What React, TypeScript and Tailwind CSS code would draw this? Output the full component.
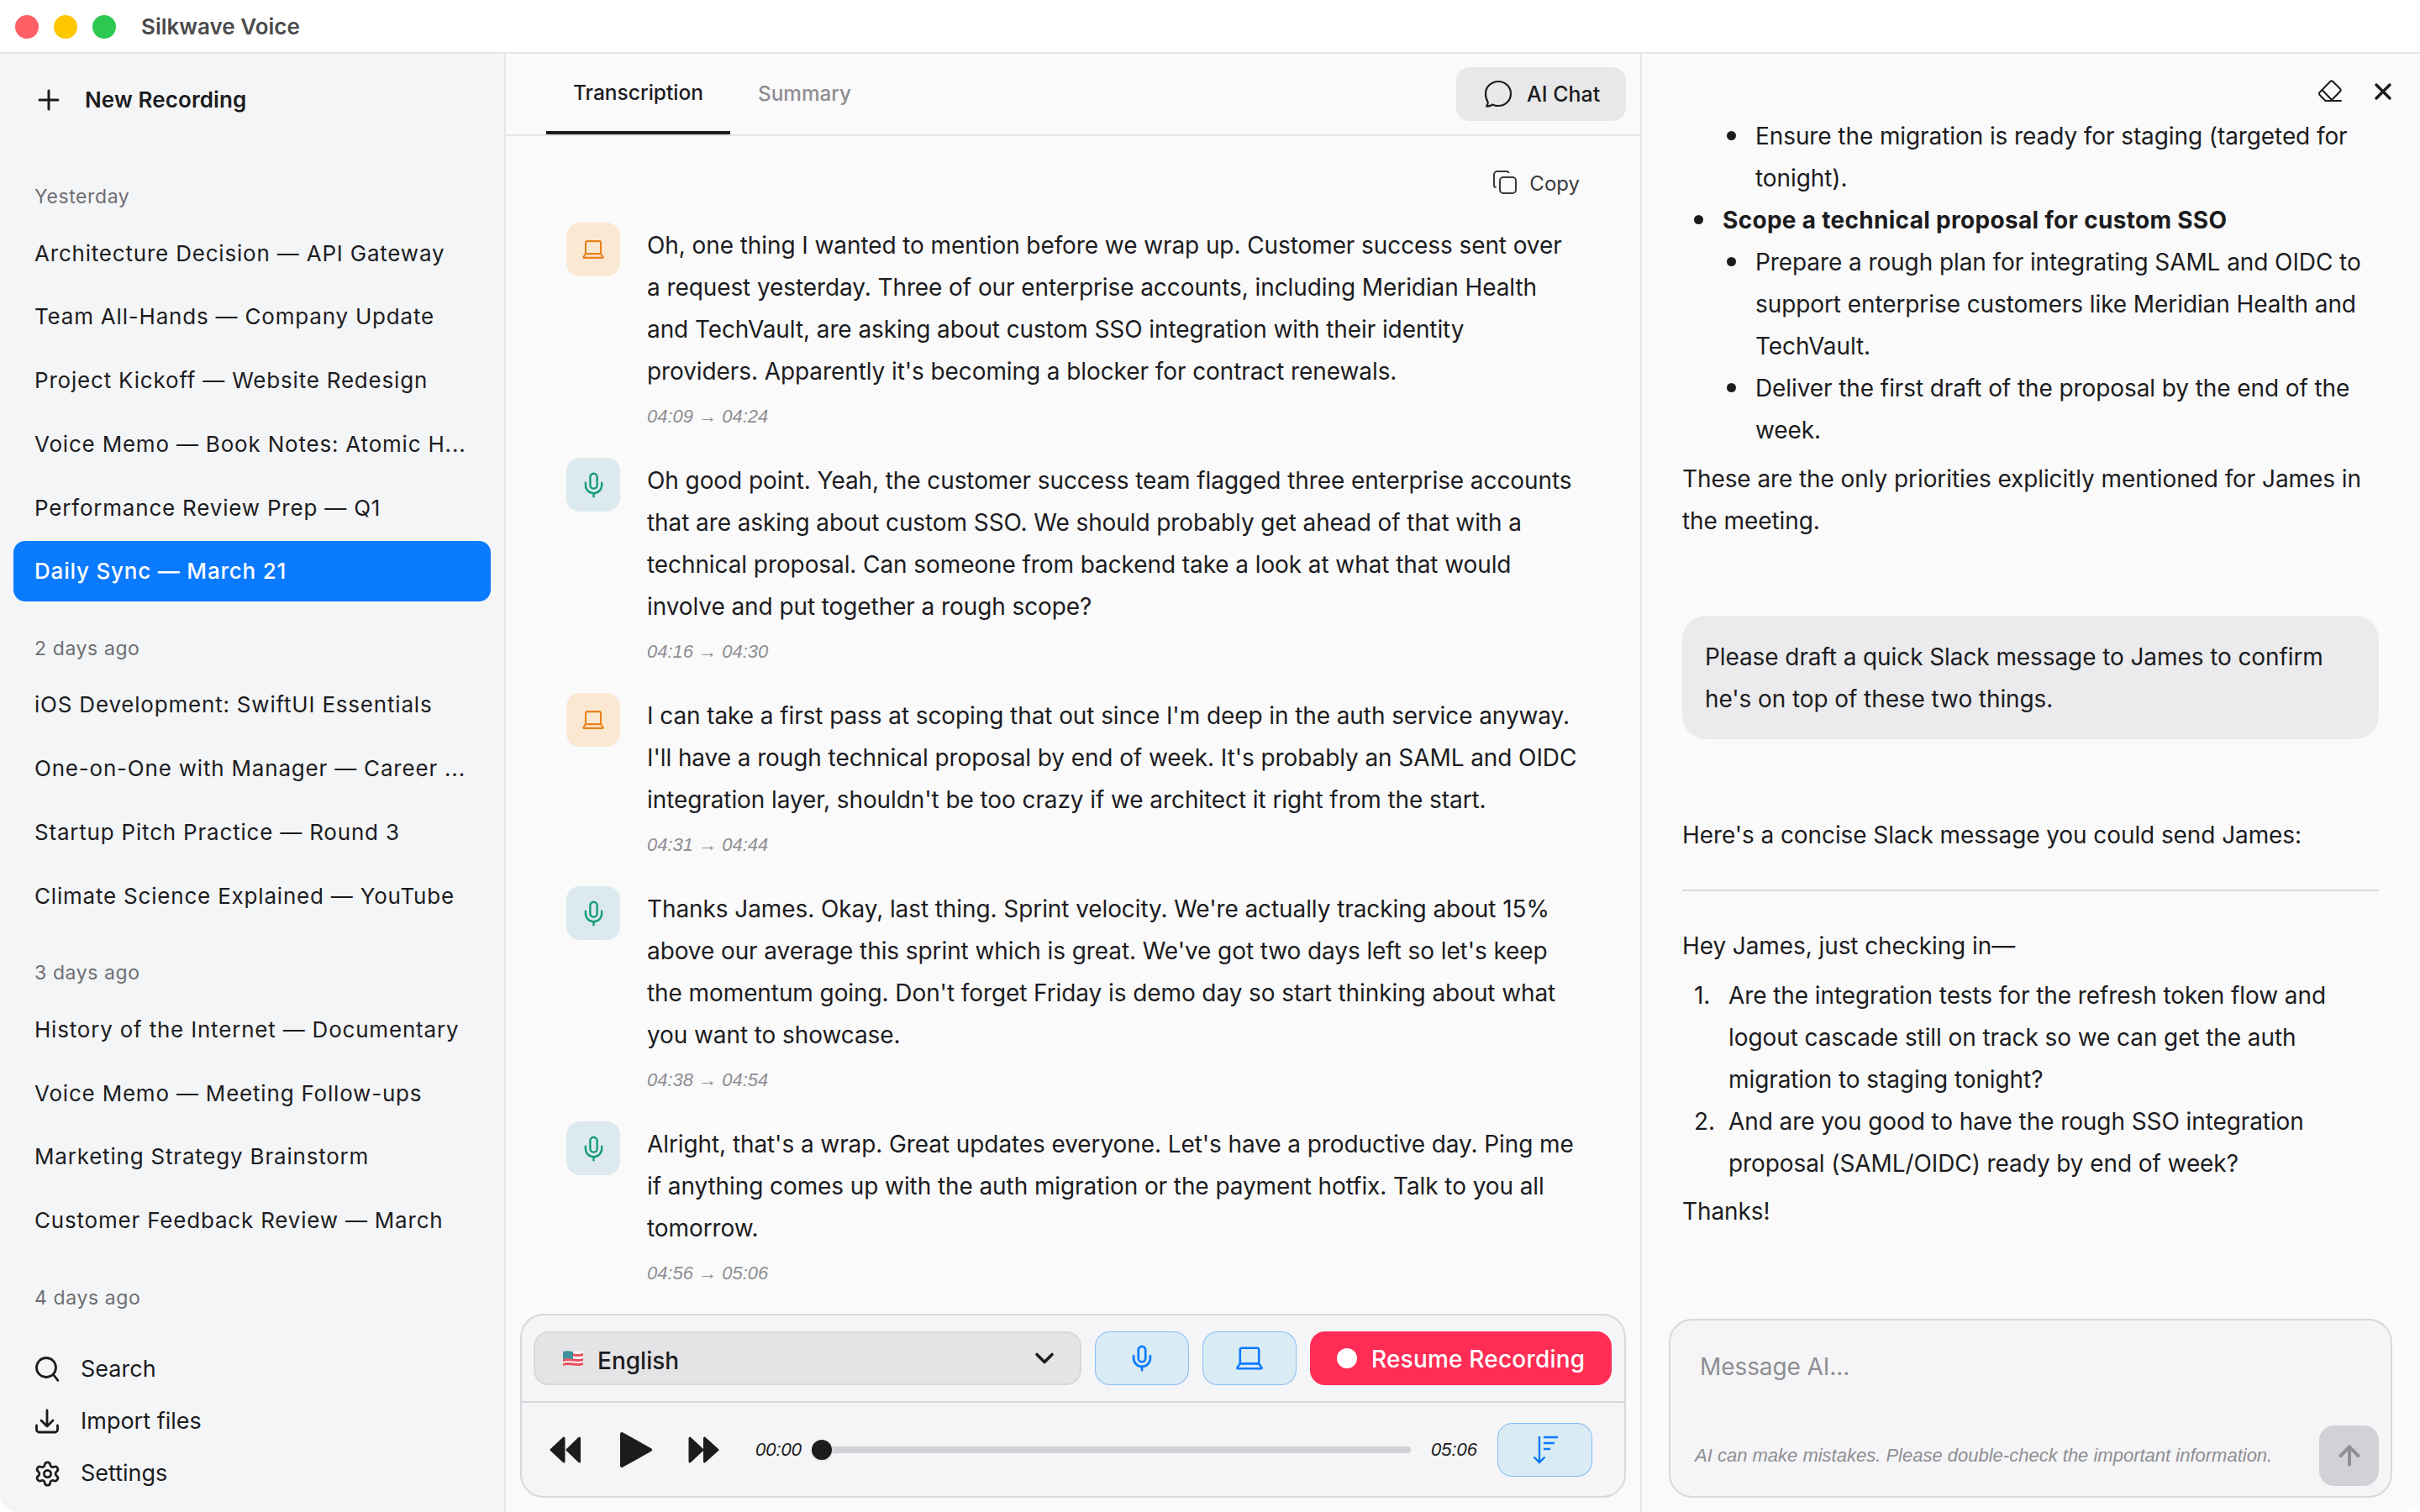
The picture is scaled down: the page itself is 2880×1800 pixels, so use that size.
import { ArrowUp, Settings, X, ChevronDown, Mic } from "lucide-react";
import type { ReactNode } from "react";

const groups = [
  {
    label: "Yesterday",
    items: [
      "Architecture Decision — API Gateway",
      "Team All-Hands — Company Update",
      "Project Kickoff — Website Redesign",
      "Voice Memo — Book Notes: Atomic H...",
      "Performance Review Prep — Q1",
      "Daily Sync — March 21",
    ],
  },
  {
    label: "2 days ago",
    items: [
      "iOS Development: SwiftUI Essentials",
      "One-on-One with Manager — Career ...",
      "Startup Pitch Practice — Round 3",
      "Climate Science Explained — YouTube",
    ],
  },
  {
    label: "3 days ago",
    items: [
      "History of the Internet — Documentary",
      "Voice Memo — Meeting Follow-ups",
      "Marketing Strategy Brainstorm",
      "Customer Feedback Review — March",
    ],
  },
];

const entries = [
  {
    source: "system",
    time: "04:09 → 04:24",
    lines: [
      "Oh, one thing I wanted to mention before we wrap up. Customer success sent over",
      "a request yesterday. Three of our enterprise accounts, including Meridian Health",
      "and TechVault, are asking about custom SSO integration with their identity",
      "providers. Apparently it's becoming a blocker for contract renewals.",
    ],
  },
  {
    source: "mic",
    time: "04:16 → 04:30",
    lines: [
      "Oh good point. Yeah, the customer success team flagged three enterprise accounts",
      "that are asking about custom SSO. We should probably get ahead of that with a",
      "technical proposal. Can someone from backend take a look at what that would",
      "involve and put together a rough scope?",
    ],
  },
  {
    source: "system",
    time: "04:31 → 04:44",
    lines: [
      "I can take a first pass at scoping that out since I'm deep in the auth service anyway.",
      "I'll have a rough technical proposal by end of week. It's probably an SAML and OIDC",
      "integration layer, shouldn't be too crazy if we architect it right from the start.",
    ],
  },
  {
    source: "mic",
    time: "04:38 → 04:54",
    lines: [
      "Thanks James. Okay, last thing. Sprint velocity. We're actually tracking about 15%",
      "above our average this sprint which is great. We've got two days left so let's keep",
      "the momentum going. Don't forget Friday is demo day so start thinking about what",
      "you want to showcase.",
    ],
  },
  {
    source: "mic",
    time: "04:56 → 05:06",
    lines: [
      "Alright, that's a wrap. Great updates everyone. Let's have a productive day. Ping me",
      "if anything comes up with the auth migration or the payment hotfix. Talk to you all",
      "tomorrow.",
    ],
  },
];

function LaptopIcon({ className }: { className?: string }) {
  return (
    <svg viewBox="0 0 30 28" fill="none" stroke="currentColor" strokeWidth="2.4" strokeLinejoin="round" className={className}>
      <path d="M4.5 20V4.5a2 2 0 0 1 2-2h17a2 2 0 0 1 2 2V20" />
      <path d="M4.5 20h21l3 4.2a.8.8 0 0 1-.7 1.3H2.2a.8.8 0 0 1-.7-1.3z" />
    </svg>
  );
}

function Line({ text }: { text: string }) {
  return <span className="block whitespace-nowrap">{text}</span>;
}

function BulletTop({ children }: { children: ReactNode }) {
  return (
    <div className="flex">
      <span className="mt-[19px] ml-[14px] h-[11px] w-[11px] shrink-0 rounded-full bg-[#1c1c1e]" />
      <div className="ml-[23px] min-w-0">{children}</div>
    </div>
  );
}

function BulletSub({ children }: { children: ReactNode }) {
  return (
    <div className="flex">
      <span className="mt-[19px] ml-[53px] h-[11px] w-[11px] shrink-0 rounded-full bg-[#1c1c1e]" />
      <div className="ml-[23px] min-w-0">{children}</div>
    </div>
  );
}

function Sidebar() {
  return (
    <aside className="flex w-[602px] shrink-0 flex-col border-r-2 border-[#e5e5ea] bg-[#f4f5f7] text-[#1c1c1e]">
      <div className="mt-[25px] flex h-[60px] items-center pl-[45px]">
        <svg viewBox="0 0 26 26" fill="none" stroke="currentColor" strokeWidth="3" strokeLinecap="round" className="h-[26px] w-[26px]">
          <path d="M13 2v22M2 13h22" />
        </svg>
        <span className="-mt-[1px] ml-[30px] text-[26px] font-semibold tracking-[0.1px]">New Recording</span>
      </div>

      <div className="mt-[69px] flex flex-col gap-[40px]">
        {groups.map((group) => (
          <section key={group.label}>
            <div className="h-[32px] pl-[41px] text-[23px] leading-[32px] tracking-[0.6px] text-[#6e6e73]">{group.label}</div>
            <ul className="mt-[15px] flex flex-col gap-[3.8px]">
              {group.items.map((item) => {
                const active = item === "Daily Sync — March 21";
                return (
                  <li
                    key={item}
                    className={`mx-[16px] flex h-[72px] items-center rounded-[14px] pl-[25px] text-[26px] tracking-[0.8px] whitespace-nowrap ${
                      active ? "bg-[#0a7aff] font-medium text-white" : ""
                    }`}
                  >
                    {item}
                  </li>
                );
              })}
            </ul>
          </section>
        ))}
        <div className="h-[32px] pl-[41px] text-[23px] leading-[32px] tracking-[0.6px] text-[#6e6e73]">4 days ago</div>
      </div>

      <nav className="mt-auto mb-[15px] flex flex-col pl-[42px] text-[27px]">
        <div className="flex h-[62px] items-center gap-[26px]">
          <svg viewBox="0 0 28 30" fill="none" stroke="currentColor" strokeWidth="2.8" strokeLinecap="round" className="h-[30px] w-[28px]">
            <circle cx="13" cy="13" r="11.5" />
            <path d="M21.5 21.5l5.5 7" />
          </svg>
          <span>Search</span>
        </div>
        <div className="flex h-[62px] items-center gap-[26px]">
          <svg viewBox="0 0 28 30" fill="none" stroke="currentColor" strokeWidth="2.8" strokeLinecap="round" strokeLinejoin="round" className="h-[30px] w-[28px]">
            <path d="M14 2v18M7 14l7 7 7-7" />
            <path d="M1.500 20v5a3 3 0 0 0 3 3h19a3 3 0 0 0 3-3v-5" />
          </svg>
          <span>Import files</span>
        </div>
        <div className="flex h-[62px] items-center gap-[26px]">
          <Settings size={33} strokeWidth={2} className="-mx-[2.5px]" />
          <span>Settings</span>
        </div>
      </nav>
    </aside>
  );
}

function Entry({ source, time, lines }: { source: string; time: string; lines: string[] }) {
  return (
    <div className="flex">
      {source === "system" ? (
        <div className="flex h-[64px] w-[64px] shrink-0 items-center justify-center rounded-[16px] bg-[#fbe8d3] text-[#e8811a]">
          <LaptopIcon className="h-[24px] w-[26px]" />
        </div>
      ) : (
        <div className="flex h-[64px] w-[64px] shrink-0 items-center justify-center rounded-[16px] bg-[#dce9ef] text-[#12997a]">
          <Mic size={33} strokeWidth={1.7} />
        </div>
      )}
      <div className="ml-[32px]">
        <div className="pt-[1.5px] text-[28px] leading-[50px] tracking-[-0.09px] text-[#1c1c1e]">
          {lines.map((line) => (
            <Line key={line} text={line} />
          ))}
        </div>
        <div className="mt-[13.5px] mb-[33px] h-[32px] font-['Liberation_Sans',sans-serif] text-[22px] leading-[32px] text-[#8e8e93] italic">
          {time}
        </div>
      </div>
    </div>
  );
}

function Player() {
  return (
    <div className="mx-[17px] mb-[17px] shrink-0 rounded-[28px] border-2 border-[#d8d8dc] bg-[#f5f5f7]">
      <div className="flex h-[104px] items-start gap-[16px] border-b-2 border-[#d8d8dc] px-[14px] pt-[19px]">
        <div className="flex h-[64px] w-[652px] items-center rounded-[18px] border-2 border-[#d8d8dc] bg-[#e4e4e7] pr-[24px] pl-[32px]">
          <svg viewBox="0 0 26 24" className="h-[24px] w-[26px]">
            <path d="M1 4c8-3 16 2 24-1v17c-8 3-16-2-24 1z" fill="#f7f7f7" />
            <path d="M1 7c8-3 16 2 24-1v3c-8 3-16-2-24 1zM1 13c8-3 16 2 24-1v3c-8 3-16-2-24 1zM1 18c8-3 16 2 24-1v3c-8 3-16-2-24 1z" fill="#e8505b" />
            <path d="M1 4c4-1.500 8-.7 12 0v9c-4-.7-8-1.500-12 0z" fill="#3f8f9a" />
          </svg>
          <span className="ml-[16px] pt-[5px] text-[28px] font-medium text-[#1c1c1e]">English</span>
          <ChevronDown size={36} strokeWidth={2.4} className="ml-auto text-[#1c1c1e]" />
        </div>
        <button className="flex h-[64px] w-[112px] items-center justify-center rounded-[18px] border border-[#0a7aff]/40 bg-[#d9ebf3] text-[#0a7aff]">
          <Mic size={34} strokeWidth={1.9} />
        </button>
        <button className="flex h-[64px] w-[112px] items-center justify-center rounded-[18px] border border-[#0a7aff]/40 bg-[#d9ebf3] text-[#0a7aff]">
          <LaptopIcon className="h-[30px] w-[32px]" />
        </button>
        <button className="flex h-[64px] w-[359px] items-center rounded-[18px] bg-[#ff2d55] pl-[32px] text-[28px] font-medium tracking-[0.2px] text-white">
          <span className="h-[24px] w-[24px] rounded-full bg-white" />
          <span className="ml-[17px] pt-[2px]">Resume Recording</span>
        </button>
      </div>

      <div className="flex h-[111px] items-center pr-[38px] pl-[33px]">
        <svg viewBox="0 0 38 32" fill="#1c1c1e" stroke="#1c1c1e" strokeWidth="3" strokeLinejoin="round" className="h-[32px] w-[38px]">
          <path d="M2 16L17 2v28zM21 16L35.500 2v28z" />
        </svg>
        <svg viewBox="0 0 40 44" fill="#1c1c1e" stroke="#1c1c1e" strokeWidth="4" strokeLinejoin="round" className="ml-[45px] h-[44px] w-[40px]">
          <path d="M3 3l34 19L3 41z" />
        </svg>
        <svg viewBox="0 0 38 32" fill="#1c1c1e" stroke="#1c1c1e" strokeWidth="3" strokeLinejoin="round" className="ml-[42px] h-[32px] w-[38px]">
          <path d="M2 2l15 14L2 30zM19.500 2L35 16 19.500 30z" />
        </svg>
        <span className="ml-[42px] w-[55px] font-['Liberation_Sans',sans-serif] text-[22px] text-[#1c1c1e] italic">00:00</span>
        <div className="ml-[12px] flex h-[24px] w-[713px] items-center">
          <span className="h-[24px] w-[24px] shrink-0 rounded-full bg-[#1c1c1e] shadow-sm" />
          <span className="h-[8px] flex-1 rounded-r-full bg-[#d1d1d6]" />
        </div>
        <span className="ml-[24px] w-[55px] font-['Liberation_Sans',sans-serif] text-[22px] text-[#1c1c1e] italic">05:06</span>
        <button className="ml-[24px] flex h-[64px] w-[113px] items-center justify-center rounded-[18px] border border-[#0a7aff]/40 bg-[#d9ebf3] text-[#0a7aff]">
          <svg viewBox="0 0 30 36" fill="none" stroke="currentColor" strokeWidth="2.4" className="h-[36px] w-[30px]">
            <path d="M8 2v31M1.500 26.500L8 33l6.500-6.500" />
            <path d="M13 3h17M13 10h13M13 17h8" strokeWidth="2.6" />
          </svg>
        </button>
      </div>
    </div>
  );
}

function Transcript() {
  return (
    <main className="flex w-[1352px] shrink-0 flex-col border-r-2 border-[#e5e5ea] bg-[#fafafa]">
      <header className="flex h-[98px] shrink-0 border-b-2 border-[#e5e5ea]">
        <div className="ml-[48px] flex h-[96px] w-[219px] items-center justify-center border-b-4 border-[#1c1c1e] text-[24.5px] font-medium text-[#1c1c1e]">
          Transcription
        </div>
        <div className="ml-[33px] flex h-[96px] items-center pb-[1px] text-[24.3px] font-medium text-[#8e8e93]">Summary</div>
        <button className="mt-[16px] mr-[17px] ml-auto flex h-[64px] w-[202px] items-center rounded-[16px] bg-[#e8e8ea] pl-[33px] text-[25px] font-medium text-[#1c1c1e]">
          <svg viewBox="0 0 34 34" fill="none" stroke="currentColor" strokeWidth="2.2" strokeLinejoin="round" className="h-[34px] w-[34px]">
            <path d="M17 2c8.500 0 15 6.500 15 14.500S25.500 31 17 31c-2.500 0-5-.5-7-1.500-2 1.500-4.500 2.500-7 2 1.500-1.500 2-3.500 1.500-5.500C2.800 23.500 2 20 2 16.500 2 8.500 8.500 2 17 2z" />
          </svg>
          <span className="ml-[17px] pt-[2px]">AI Chat</span>
        </button>
      </header>

      <div className="flex h-[103px] shrink-0 items-start justify-end pt-[41px] pr-[72px] text-[24px] leading-[32px] text-[#3a3a3c]">
        <svg viewBox="0 0 28 28" fill="none" stroke="currentColor" strokeWidth="2" strokeLinejoin="round" className="h-[28px] w-[28px]">
          <rect x="8" y="8" width="19" height="19" rx="4" />
          <path d="M3.500 20A2.500 2.500 0 0 1 1 17.500V5a4 4 0 0 1 4-4h11a2.500 2.500 0 0 1 2.500 2" />
        </svg>
        <span className="ml-[15px]">Copy</span>
      </div>

      <div className="min-h-0 flex-1 overflow-hidden pl-[72px]">
        {entries.map((entry) => (
          <Entry key={entry.time} {...entry} />
        ))}
      </div>

      <Player />
    </main>
  );
}

function ChatPanel() {
  return (
    <section className="flex min-w-0 flex-1 flex-col bg-[#fafafa] text-[28px] leading-[50px] tracking-[-0.09px] text-[#1c1c1e]">
      <div className="flex h-[73px] shrink-0 items-start justify-end gap-[33px] pt-[31px] pr-[28px]">
        <svg viewBox="0 0 28 26" fill="none" stroke="currentColor" strokeWidth="2" strokeLinejoin="round" strokeLinecap="round" className="h-[26px] w-[28px]">
          <path d="M14 2.200a2.500 2.500 0 0 1 3.500 0l8.300 8.300a2.500 2.500 0 0 1 0 3.500L15 25H8.500l-6.700-6.700a2.500 2.500 0 0 1 0-3.500z" />
          <path d="M4.500 12l12.500 13M15 25h12" />
        </svg>
        <X size={32} strokeWidth={2.6} className="-mt-[2px]" />
      </div>

      <div className="min-h-0 flex-1 overflow-hidden pl-[48px]">
        <BulletSub>
          <Line text="Ensure the migration is ready for staging (targeted for" />
          <Line text="tonight)." />
        </BulletSub>
        <BulletTop>
          <span className="font-bold tracking-[0.3px]">Scope a technical proposal for custom SSO</span>
        </BulletTop>
        <BulletSub>
          <Line text="Prepare a rough plan for integrating SAML and OIDC to" />
          <Line text="support enterprise customers like Meridian Health and" />
          <Line text="TechVault." />
        </BulletSub>
        <BulletSub>
          <Line text="Deliver the first draft of the proposal by the end of the" />
          <Line text="week." />
        </BulletSub>
        <p className="mt-[8px]">
          <Line text="These are the only priorities explicitly mentioned for James in" />
          <Line text="the meeting." />
        </p>

        <div className="mt-[88px] mr-[49px] h-[147px] rounded-[28px] bg-[#ebebed] pt-[24px] pl-[27px]">
          <Line text="Please draft a quick Slack message to James to confirm" />
          <Line text="he's on top of these two things." />
        </div>

        <p className="mt-[89px]">Here's a concise Slack message you could send James:</p>
        <hr className="mt-[40px] mr-[49px] border-t-2 border-[#d8d8dc]" />
        <p className="mt-[40px]">Hey James, just checking in—</p>
        <div className="mt-[9px]">
          <div className="flex">
            <span className="ml-[14px] w-[41px] shrink-0">1.</span>
            <div>
              <Line text="Are the integration tests for the refresh token flow and" />
              <Line text="logout cascade still on track so we can get the auth" />
              <Line text="migration to staging tonight?" />
            </div>
          </div>
          <div className="flex">
            <span className="ml-[14px] w-[41px] shrink-0">2.</span>
            <div>
              <Line text="And are you good to have the rough SSO integration" />
              <Line text="proposal (SAML/OIDC) ready by end of week?" />
            </div>
          </div>
        </div>
        <p className="mt-[7px]">Thanks!</p>
      </div>

      <div className="mr-[33px] mb-[17px] ml-[32px] flex h-[213px] shrink-0 flex-col justify-between rounded-[28px] border-2 border-[#d8d8dc] bg-[#f5f5f7] pb-[12px]">
        <div className="pt-[35px] pl-[35px] text-[28px] leading-[40px] text-[#8e8e93]">Message AI...</div>
        <div className="flex items-center justify-between pr-[14px] pl-[29px]">
          <span className="font-['Liberation_Sans',sans-serif] text-[22px] leading-[32px] tracking-normal text-[#8e8e93] italic">
            AI can make mistakes. Please double-check the important information.
          </span>
          <button className="flex h-[72px] w-[71px] items-center justify-center rounded-[18px] bg-[#d1d1d6] text-[#8e8e93]">
            <ArrowUp size={36} strokeWidth={2.6} />
          </button>
        </div>
      </div>
    </section>
  );
}

export default function App() {
  return (
    <div className="h-[1800px] w-[2880px] overflow-hidden bg-white font-['Inter',sans-serif]">
      <div className="flex h-full flex-col overflow-hidden rounded-[20px]">
        <div className="flex h-[64px] shrink-0 items-center border-b-2 border-[#e5e5ea] bg-white pt-[2px] pl-[18px]">
          <span className="h-[28px] w-[28px] rounded-full bg-[#ff5f66]" />
          <span className="ml-[18px] h-[28px] w-[28px] rounded-full bg-[#ffc700]" />
          <span className="ml-[18px] h-[28px] w-[28px] rounded-full bg-[#2cc84f]" />
          <span className="-mt-[2px] ml-[30px] text-[26px] font-semibold text-[#4a4a4c]">Silkwave Voice</span>
        </div>
        <div className="flex min-h-0 flex-1">
          <Sidebar />
          <Transcript />
          <ChatPanel />
        </div>
      </div>
    </div>
  );
}
